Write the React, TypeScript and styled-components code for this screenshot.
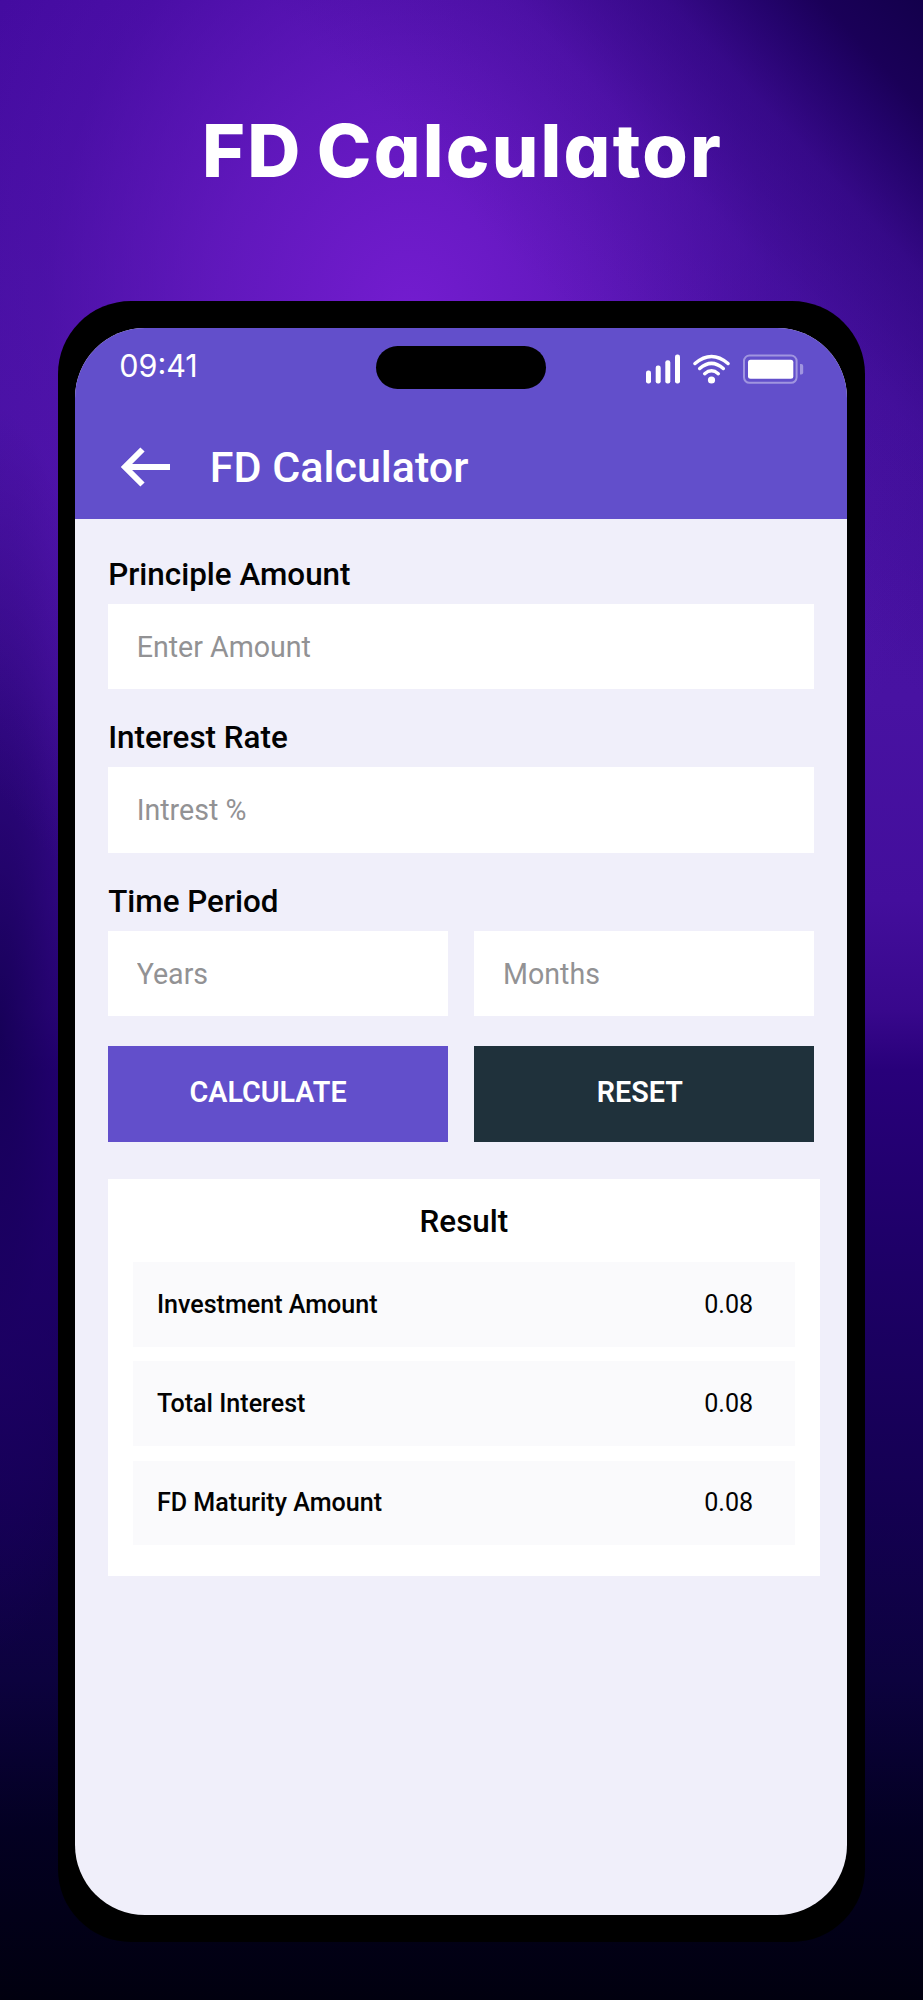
import React from "react";
import styled, { createGlobalStyle } from "styled-components";

const GlobalStyle = createGlobalStyle`
  * { box-sizing: border-box; }
  body { margin: 0; background: #020016; }
`;

const Poster = styled.main`
  width: 923px;
  height: 2000px;
  padding: 96px 0 0 57.5px;
  overflow: hidden;
  font-family: Roboto, "Liberation Sans", sans-serif;
  color: #020202;
  background:
    linear-gradient(47deg, rgba(50, 10, 130, 0) 1560px, rgba(50, 10, 130, 0.25) 1740px, rgba(42, 6, 118, 0.6) 1850px, rgba(32, 2, 102, 0.9) 1920px, #1a0058 1965px, #12004a 2050px) 0 0 / 923px 2000px,
    radial-gradient(ellipse 560px 700px at 410px 320px, rgba(118, 29, 210, 0.95) 0%, rgba(108, 28, 200, 0.7) 35%, rgba(92, 23, 184, 0.35) 65%, rgba(80, 18, 172, 0) 100%),
    radial-gradient(ellipse 120px 620px at 0px 1030px, rgba(20, 0, 84, 0.9) 0%, rgba(28, 0, 100, 0.6) 50%, rgba(40, 4, 130, 0) 100%),
    linear-gradient(180deg, #40099c 0px, #4510a0 400px, #4812a2 700px, #430e9c 900px, #38088c 1010px, #28007a 1070px, #1e0068 1250px, #140052 1500px, #0c023e 1680px, #030022 1830px, #01000f 2000px);
`;

const Headline = styled.h1`
  width: 808px;
  height: 109px;
  margin: 0 0 96px;
  padding-left: 2px;
  display: flex;
  align-items: center;
  justify-content: center;
  font: 800 73.5px/1 Inter, sans-serif;
  font-feature-settings: "cv11";
  letter-spacing: 2.2px;
  word-spacing: -4px;
  white-space: nowrap;
  color: #fff;
`;

const Phone = styled.section`
  width: 807.5px;
  height: 1641px;
  padding: 27.3px 17.8px;
  border-radius: 73px;
  background: #000;
`;

const Screen = styled.div`
  width: 771.8px;
  height: 1586.8px;
  border-radius: 70px;
  overflow: hidden;
  background: #f0effa;
`;

const TopArea = styled.header`
  height: 190.7px;
  background: #624fcb;
  color: #fff;
`;

const StatusBar = styled.div`
  height: 78px;
  padding: 17.4px 43px 0 44px;
  display: grid;
  grid-template-columns: 257px 170px 1fr;
  align-items: start;
`;

const Clock = styled.time`
  font: 400 30.5px/40px Inter, sans-serif;
`;

const Island = styled.div`
  height: 43px;
  border-radius: 22px;
  background: #000;
`;

const StatusIcons = styled.svg`
  justify-self: end;
  margin-top: 7px;
  display: block;
`;

const AppBar = styled.div`
  height: 112px;
  padding: 8.6px 45px 0;
  display: flex;
  align-items: center;
  gap: 38.5px;
`;

const AppTitle = styled.h2`
  margin: 0;
  font-size: 43px;
  line-height: 60px;
  font-weight: 500;
`;

const Content = styled.div`
  padding: 38px 27.5px 0 32.9px;
`;

const Field = styled.div`
  width: 706px;
  height: 163.5px;
`;

const Label = styled.label`
  display: block;
  height: 46.7px;
  font-size: 31.4px;
  line-height: 36px;
  font-weight: 500;
`;

const Pair = styled.div`
  width: 706px;
  display: grid;
  grid-template-columns: 1fr 1fr;
  gap: 26.6px;
`;

const Input = styled.input`
  width: 100%;
  height: 85.7px;
  padding: 0 28.5px;
  display: block;
  border: 0;
  border-radius: 0;
  background: #fff;
  font: 400 28.6px/34px Roboto, sans-serif;
  &::placeholder { color: #929294; opacity: 1; }
`;

const Button = styled.button<{ $dark?: boolean }>`
  height: 96.6px;
  padding: 0 ${(p) => (p.$dark ? "9px" : "20px")} 4px 0;
  border: 0;
  color: #fff;
  background: ${(p) => (p.$dark ? "#1f313b" : "#624fcb")};
  font: 600 28.7px/34px Roboto, sans-serif;
`;

const Actions = styled(Pair)`
  margin-top: -1.8px;
`;

const ResultCard = styled.section`
  margin-top: 36.7px;
  height: 397px;
  padding: 25px 24.4px 0;
  background: #fff;
`;

const ResultTitle = styled.h3`
  margin: 0 0 22px;
  text-align: center;
  font-size: 31.4px;
  line-height: 36px;
  font-weight: 500;
`;

const Rows = styled.dl`
  margin: 0;
  display: grid;
  gap: 14.6px;
`;

const Row = styled.div`
  height: 84.7px;
  padding: 0 42px 0 24.3px;
  display: flex;
  align-items: center;
  justify-content: space-between;
  background: #fafafc;
  font-size: 25.1px;
`;

const Term = styled.dt`
  font-weight: 500;
`;

const Value = styled.dd`
  margin: 0;
`;

const results = [
  ["Investment Amount", "0.08"],
  ["Total Interest", "0.08"],
  ["FD Maturity Amount", "0.08"],
];

function Status() {
  return (
    <StatusIcons width="159" height="32" viewBox="0 0 159 32" fill="none">
      <g fill="#fff">
        <rect x="1" y="17.5" width="5" height="13" rx="2.2" />
        <rect x="10.7" y="12.5" width="5" height="18" rx="2.2" />
        <rect x="20.3" y="7.2" width="5" height="23.3" rx="2.2" />
        <rect x="30" y="1.5" width="5" height="29" rx="2.2" />
        <circle cx="66.5" cy="27" r="3.6" />
        <rect x="103" y="6.7" width="45.3" height="19" rx="2.5" />
      </g>
      <g stroke="#fff" strokeWidth="3.5" strokeLinecap="round">
        <path d="M50 10.5Q66.5-3.5 83 10.5" />
        <path d="M54.7 15.5Q66.5 5.3 78.3 15.5" />
        <path d="M59.7 20.7Q66.5 14.8 73.3 20.7" />
      </g>
      <rect x="99" y="2.5" width="52.6" height="27.3" rx="5.5" stroke="#fff" strokeOpacity=".4" strokeWidth="2" />
      <path d="M155 11h1.2q2 0 2 2v6.500q0 2-2 2H155z" fill="#fff" fillOpacity=".4" />
    </StatusIcons>
  );
}

export default function App() {
  return (
    <>
      <GlobalStyle />
      <Poster>
        <Headline>FD Calculator</Headline>
        <Phone>
          <Screen>
            <TopArea>
              <StatusBar>
                <Clock>09:41</Clock>
                <Island />
                <Status />
              </StatusBar>
              <AppBar>
                <svg width="51" height="40" viewBox="0 0 51 40" fill="none" stroke="#fff" strokeWidth="6">
                  <path d="M22.500 2.500 5 20l17.500 17.500M5 20h45" />
                </svg>
                <AppTitle>FD Calculator</AppTitle>
              </AppBar>
            </TopArea>
            <Content>
              <Field>
                <Label htmlFor="amount">Principle Amount</Label>
                <Input id="amount" placeholder="Enter Amount" />
              </Field>
              <Field>
                <Label htmlFor="rate">Interest Rate</Label>
                <Input id="rate" placeholder="Intrest %" />
              </Field>
              <Field>
                <Label htmlFor="years">Time Period</Label>
                <Pair>
                  <Input id="years" placeholder="Years" />
                  <Input placeholder="Months" />
                </Pair>
              </Field>
              <Actions>
                <Button>CALCULATE</Button>
                <Button $dark>RESET</Button>
              </Actions>
              <ResultCard>
                <ResultTitle>Result</ResultTitle>
                <Rows>
                  {results.map(([term, value]) => (
                    <Row key={term}>
                      <Term>{term}</Term>
                      <Value>{value}</Value>
                    </Row>
                  ))}
                </Rows>
              </ResultCard>
            </Content>
          </Screen>
        </Phone>
      </Poster>
    </>
  );
}
